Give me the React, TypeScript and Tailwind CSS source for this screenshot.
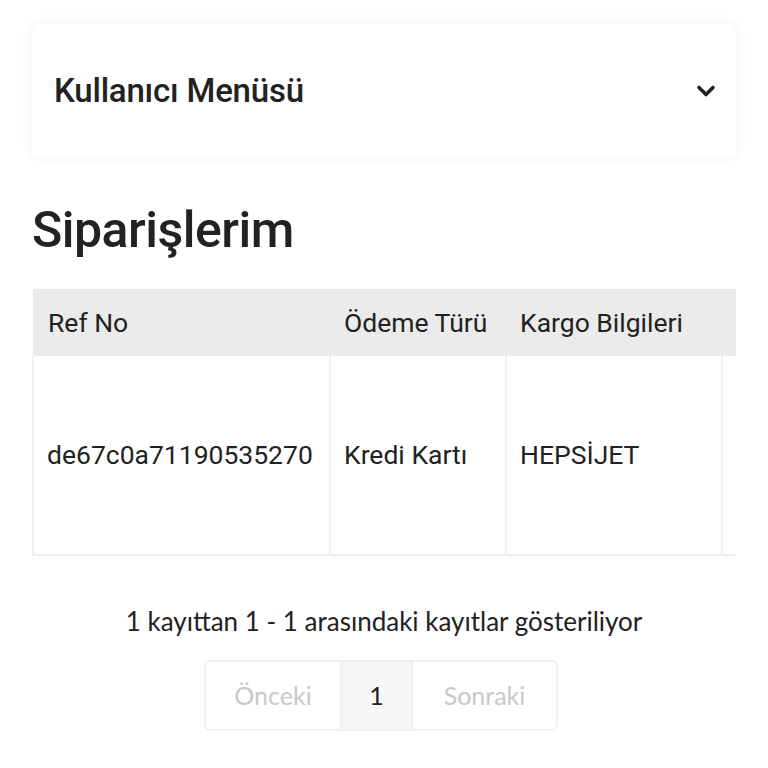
import React from 'react';

const Chevron = () => (
  <svg width="20" height="14" viewBox="0 0 20 14" fill="none">
    <path d="M3 3.5 L10 10.5 L17 3.5" stroke="#222" strokeWidth="3.6" strokeLinecap="round" strokeLinejoin="round" />
  </svg>
);

export default function App() {
  const headFont = { fontFamily: '"Roboto", "Liberation Sans", sans-serif' };

  return (
    <div className="min-h-[768px] bg-white px-8 pt-6 text-[#222]" style={{ fontFamily: '"Lato", "Open Sans", sans-serif' }}>
      {/* User menu */}
      <div className="flex h-[133px] items-center justify-between rounded-lg bg-white pl-[22px] pr-[20px] shadow-[0_0_14px_rgba(0,0,0,0.06)]">
        <span className="text-[33px] font-medium tracking-[-0.2px]" style={headFont}>Kullanıcı Menüsü</span>
        <Chevron />
      </div>

      <h1 className="mt-[40px] text-[50px] font-medium leading-[66px] tracking-[-0.5px]" style={headFont}>Siparişlerim</h1>

      {/* Orders table */}
      <div className="mt-[26px] overflow-hidden">
        <table className="w-[900px] table-fixed border-collapse text-[26.5px]" style={headFont}>
          <colgroup>
            <col className="w-[297px]" />
            <col className="w-[176px]" />
            <col className="w-[216px]" />
            <col className="w-[211px]" />
          </colgroup>
          <thead>
            <tr className="h-[67px] bg-[#ebebeb] text-left">
              <th className="pl-[15px] font-normal">Ref No</th>
              <th className="pl-[14px] font-normal">Ödeme Türü</th>
              <th className="pl-[14px] font-normal">Kargo Bilgileri</th>
              <th className="pl-[14px] font-normal"></th>
            </tr>
          </thead>
          <tbody>
            <tr className="h-[199px] border-b-2 border-[#eeeeee]">
              <td className="border-x-2 border-[#f0f0f0] pl-[13px]">de67c0a71190535270</td>
              <td className="border-x-2 border-[#f0f0f0] pl-[13px]">Kredi Kartı</td>
              <td className="border-x-2 border-[#f0f0f0] pl-[13px]">HEPSİJET</td>
              <td className="border-x-2 border-[#f0f0f0] pl-[13px]"></td>
            </tr>
          </tbody>
        </table>
      </div>

      {/* Pagination */}
      <p className="mt-[46px] text-center text-[26px]">1 kayıttan 1 - 1 arasındaki kayıtlar gösteriliyor</p>
      <div className="mt-[19px] flex justify-center pr-[6px]">
        <div className="flex h-[71px] overflow-hidden rounded-md border-2 border-[#f0f0f0] text-[25px]">
          <span className="flex w-[134px] items-center justify-center text-[#c8c8c8]">Önceki</span>
          <span className="flex w-[73px] items-center justify-center border-x-2 border-[#f0f0f0] bg-[#f7f7f7]">1</span>
          <span className="flex w-[143px] items-center justify-center text-[#c8c8c8]">Sonraki</span>
        </div>
      </div>
    </div>
  );
}
